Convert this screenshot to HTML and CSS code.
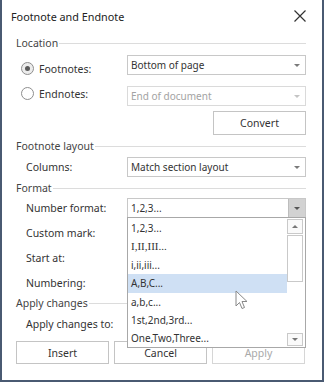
FILE: index.html
```html
<!DOCTYPE html>
<html lang="en">
<head>
    <meta charset="UTF-8">
    <title>Footnote and Endnote</title>
    <link rel="stylesheet" href="styles.css">
</head>
<body>
    <div class="dialog">
        <div class="title-bar">
            <span class="title">Footnote and Endnote</span>
            <svg class="close" width="14" height="14" viewBox="0 0 14 14">
                <path d="M1.5 1.5 L12.5 12.5 M12.5 1.5 L1.5 12.5" stroke="#333" stroke-width="1.2" fill="none"/>
            </svg>
        </div>

        <div class="group-title group-location">Location</div>
        <div class="row row-footnotes">
            <label class="radio-label"><span class="radio checked"></span>Footnotes:</label>
            <div class="combo"><span>Bottom of page</span><i class="arrow"></i></div>
        </div>
        <div class="row row-endnotes">
            <label class="radio-label"><span class="radio"></span>Endnotes:</label>
            <div class="combo disabled"><span>End of document</span><i class="arrow"></i></div>
        </div>
        <div class="convert-row">
            <button class="btn">Convert</button>
        </div>

        <div class="group-title group-layout">Footnote layout</div>
        <div class="row row-columns">
            <span class="label">Columns:</span>
            <div class="combo"><span>Match section layout</span><i class="arrow"></i></div>
        </div>

        <div class="group-title group-format">Format</div>
        <div class="row row-number">
            <span class="label">Number format:</span>
            <div class="combo open">
                <span>1,2,3...</span><i class="arrow"></i>
                <div class="dropdown">
                    <ul class="options">
                        <li>1,2,3...</li>
                        <li class="serif">I,II,III...</li>
                        <li>i,ii,iii...</li>
                        <li class="hover">A,B,C...</li>
                        <li>a,b,c...</li>
                        <li>1st,2nd,3rd...</li>
                        <li>One,Two,Three...</li>
                    </ul>
                    <div class="scrollbar">
                        <div class="scroll-btn"><i class="up"></i></div>
                        <div class="thumb"></div>
                        <div class="track"></div>
                        <div class="scroll-btn"><i class="down"></i></div>
                    </div>
                    <svg class="cursor" width="14" height="21" viewBox="0 0 14 21">
                        <path d="M1 1 L1 16 L4.5 12.5 L7 18.5 L9.5 17.5 L7 11.5 L12 11.5 Z" fill="#fff" stroke="#888" stroke-width="1" stroke-linejoin="round"/>
                    </svg>
                </div>
            </div>
        </div>
        <div class="row row-plain"><span class="label">Custom mark:</span></div>
        <div class="row row-plain"><span class="label">Start at:</span></div>
        <div class="row row-plain"><span class="label">Numbering:</span></div>

        <div class="group-title group-apply">Apply changes</div>
        <div class="row row-apply"><span class="label">Apply changes to:</span></div>

        <div class="buttons">
            <button class="btn">Insert</button>
            <button class="btn">Cancel</button>
            <button class="btn disabled">Apply</button>
        </div>
    </div>
</body>
</html>
```

FILE: styles.css
```css
:root {
    --text: #333;
    --muted: #a3a3a3;
    --border: #c8c8c8;
    --line: #dcdcdc;
    --frame: #4a5a72;
    --hover: #cfe0f4;
}

* {
    margin: 0;
    padding: 0;
    box-sizing: border-box;
}

body {
    width: 324px;
    height: 382px;
    font-family: "Noto Sans", "Open Sans", sans-serif;
    font-size: 10px;
    color: var(--text);
    background: #fff;
    overflow: hidden;
}

.dialog {
    width: 324px;
    height: 382px;
    display: flex;
    flex-direction: column;
    padding: 0 16px 0 14px;
    border-left: 2px solid var(--frame);
    border-right: 2px solid var(--frame);
    border-bottom: 2px solid var(--frame);
    background: #fff;
}

.title-bar {
    height: 32px;
    margin-left: -5px;
    margin-right: -1px;
    display: flex;
    align-items: center;
    justify-content: space-between;
}

.title {
    font-size: 10.8px;
    color: #222;
}

/* group headings with a rule after the text */
.group-title {
    height: 16px;
    line-height: 16px;
    display: flex;
    align-items: center;
    gap: 1px;
    color: #444;
    font-size: 10.5px;
}

.group-title::after {
    content: '';
    flex: 1;
    height: 1px;
    margin-top: 1px;
    background: var(--line);
}

.group-location { margin-top: 3px; }
.group-layout { margin-top: 3px; }
.group-format { margin-top: 3px; }
.group-apply { margin-top: 2px; }

.row {
    height: 20px;
    display: flex;
    align-items: center;
    padding-left: 10px;
}

.row-footnotes { margin-top: 4px; }
.row-endnotes { margin-top: 11px; }
.row-columns { margin-top: 3px; }
.row-number { margin-top: 2px; }
.row-plain { margin-top: 5px; }
.row-apply { margin-top: 3px; }

.label {
    width: 101px;
    flex: none;
    font-size: 10.5px;
}

.radio-label {
    width: 106px;
    flex: none;
    display: flex;
    align-items: center;
    gap: 5px;
    margin-left: -5px;
    font-size: 10.5px;
}

.row-footnotes .radio-label { margin-top: 7px; }
.row-endnotes .radio-label { margin-top: -5px; }

.radio {
    width: 13px;
    height: 13px;
    border: 1px solid #8e8e8e;
    border-radius: 50%;
    background: #fff;
    display: flex;
    align-items: center;
    justify-content: center;
}

.radio.checked {
    background: #ececec;
}

.radio.checked::after {
    content: '';
    width: 5px;
    height: 5px;
    border-radius: 50%;
    background: #5a5a5a;
}

.combo {
    position: relative;
    width: 179px;
    height: 20px;
    border: 1px solid var(--border);
    background: #fff;
    display: flex;
    align-items: center;
    justify-content: space-between;
    padding-left: 3px;
}

.combo.disabled {
    border-color: #dadada;
    color: var(--muted);
}

.arrow {
    width: 17px;
    height: 18px;
    display: flex;
    align-items: center;
    justify-content: center;
}

.arrow::after {
    content: '';
    border-left: 3px solid transparent;
    border-right: 3px solid transparent;
    border-top: 3px solid #7a7a7a;
}

.combo.disabled .arrow::after {
    border-top-color: #c4c4c4;
}

.combo.open .arrow {
    background: #d2d2d2;
    border-left: 1px solid #bdbdbd;
}

.combo.open .arrow::after {
    border-top-color: #555;
}

.convert-row {
    display: flex;
    justify-content: flex-end;
    margin-top: 5px;
}

.btn {
    width: 93px;
    height: 24px;
    border: 1px solid #c4c4c4;
    background: #fff;
    font-family: inherit;
    font-size: 10.5px;
    color: var(--text);
}

.btn.disabled {
    color: #a9a9a9;
    border-color: #d6d6d6;
}

.buttons {
    display: flex;
    gap: 5px;
    margin-top: 7px;
}

.buttons .btn {
    height: 23px;
}

/* open drop-down list */
.dropdown {
    position: absolute;
    top: 18px;
    left: -1px;
    width: 179px;
    height: 131px;
    border: 1px solid #a8a8a8;
    background: #fff;
    display: flex;
    padding: 1px 2px 1px 0;
    z-index: 2;
}

.options {
    list-style: none;
    flex: 1;
}

.options li {
    height: 18.4px;
    line-height: 18.4px;
    padding-left: 3px;
}

.options li.serif {
    font-family: "Liberation Serif", serif;
    font-size: 11px;
}

.options li.hover {
    background: var(--hover);
}

.scrollbar {
    width: 16px;
    display: flex;
    flex-direction: column;
    gap: 1px;
}

.scroll-btn {
    height: 15px;
    border: 1px solid #c9c9c9;
    background: #fafafa;
    display: flex;
    align-items: center;
    justify-content: center;
}

.scroll-btn:last-child {
    height: 13px;
}

.scroll-btn .up {
    border-left: 3px solid transparent;
    border-right: 3px solid transparent;
    border-bottom: 3px solid #777;
}

.scroll-btn .down {
    border-left: 3px solid transparent;
    border-right: 3px solid transparent;
    border-top: 3px solid #777;
}

.thumb {
    height: 47px;
    border: 1px solid #c9c9c9;
    background: #fff;
}

.track {
    flex: 1;
}

.cursor {
    position: absolute;
    left: 107px;
    top: 72px;
}
```
